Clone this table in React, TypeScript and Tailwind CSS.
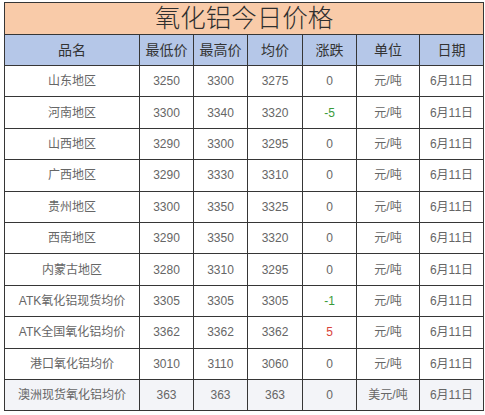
const rows = [
  { name: '山东地区', low: '3250', high: '3300', avg: '3275', chg: '0', unit: '元/吨' },
  { name: '河南地区', low: '3300', high: '3340', avg: '3320', chg: '-5', unit: '元/吨' },
  { name: '山西地区', low: '3290', high: '3300', avg: '3295', chg: '0', unit: '元/吨' },
  { name: '广西地区', low: '3290', high: '3330', avg: '3310', chg: '0', unit: '元/吨' },
  { name: '贵州地区', low: '3300', high: '3350', avg: '3325', chg: '0', unit: '元/吨' },
  { name: '西南地区', low: '3290', high: '3350', avg: '3320', chg: '0', unit: '元/吨' },
  { name: '内蒙古地区', low: '3280', high: '3310', avg: '3295', chg: '0', unit: '元/吨' },
  { name: 'ATK氧化铝现货均价', low: '3305', high: '3305', avg: '3305', chg: '-1', unit: '元/吨' },
  { name: 'ATK全国氧化铝均价', low: '3362', high: '3362', avg: '3362', chg: '5', unit: '元/吨' },
  { name: '港口氧化铝均价', low: '3010', high: '3110', avg: '3060', chg: '0', unit: '元/吨' },
  { name: '澳洲现货氧化铝均价', low: '363', high: '363', avg: '363', chg: '0', unit: '美元/吨' },
];

const headers = ['品名', '最低价', '最高价', '均价', '涨跌', '单位', '日期'];

function chgColor(v: string) {
  if (v.startsWith('-')) return 'text-[#3a9a3a]';
  if (v !== '0') return 'text-[#d9423a]';
  return 'text-[#666]';
}

export default function App() {
  return (
    <div
      className="w-[485px] h-[415px] bg-white pt-[2px] pl-[4px]"
      style={{ fontFamily: '"Liberation Sans", "Noto Sans CJK SC", sans-serif' }}
    >
      <table className="w-[479px] table-fixed border-collapse">
        <colgroup>
          <col className="w-[135px]" />
          <col className="w-[54px]" />
          <col className="w-[54px]" />
          <col className="w-[55px]" />
          <col className="w-[54px]" />
          <col className="w-[63px]" />
          <col className="w-[64px]" />
        </colgroup>
        <thead>
          <tr className="h-[32px] bg-[#f9cba9]">
            <th
              colSpan={7}
              className="border border-[#363636] text-[25.5px] font-light leading-none text-[#2f2f2f] text-center"
            >
              氧化铝今日价格
            </th>
          </tr>
          <tr className="h-[31px] bg-[#b5c7e8]">
            {headers.map((h) => (
              <th
                key={h}
                className="border border-[#363636] text-[14px] font-normal text-[#333] text-center"
              >
                {h}
              </th>
            ))}
          </tr>
        </thead>
        <tbody>
          {rows.map((r, i) => (
            <tr
              key={r.name}
              className={`h-[31.4px] ${i === rows.length - 1 ? 'bg-[#f3f4f8]' : 'bg-white'}`}
            >
              <td className="border border-[#363636] text-center text-[12px] text-[#666]">{r.name}</td>
              <td className="border border-[#363636] text-center text-[12px] text-[#666]">{r.low}</td>
              <td className="border border-[#363636] text-center text-[12px] text-[#666]">{r.high}</td>
              <td className="border border-[#363636] text-center text-[12px] text-[#666]">{r.avg}</td>
              <td className={`border border-[#363636] text-center text-[12px] ${chgColor(r.chg)}`}>{r.chg}</td>
              <td className="border border-[#363636] text-center text-[12px] text-[#666]">{r.unit}</td>
              <td className="border border-[#363636] text-center text-[12px] text-[#666]">6月11日</td>
            </tr>
          ))}
        </tbody>
      </table>
    </div>
  );
}
